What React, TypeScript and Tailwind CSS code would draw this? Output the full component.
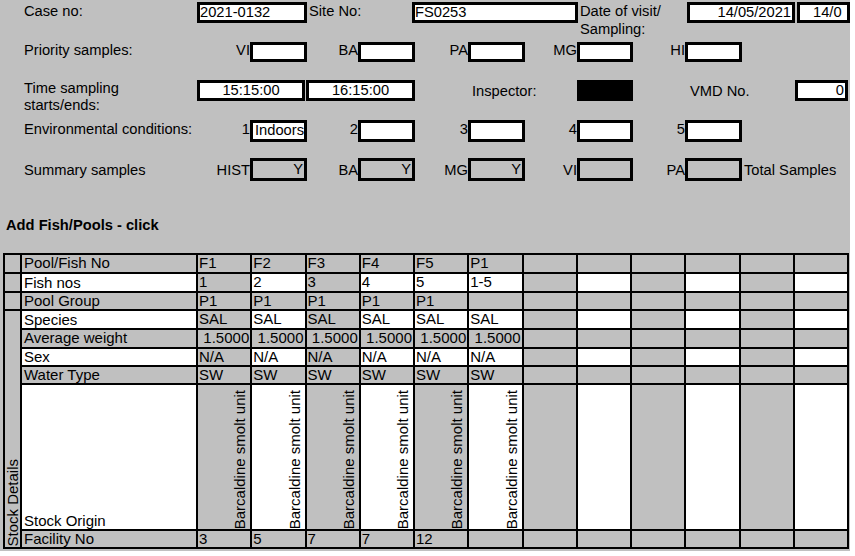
import React from 'react';

type FieldProps = { className?: string; children?: React.ReactNode };

const Field = ({ className = '', children }: FieldProps) => (
    <div className={`shrink-0 border-[3px] border-black overflow-hidden whitespace-nowrap leading-[15px] ${className}`}>
        {children}
    </div>
);

const Lbl = ({ className = '', children }: FieldProps) => (
    <div className={`shrink-0 whitespace-nowrap leading-4 ${className}`}>{children}</div>
);

// grid rows of the stock table
const rows = [
    { label: 'Pool/Fish No', vals: ['F1', 'F2', 'F3', 'F4', 'F5', 'P1'], kind: 'gray' },
    { label: 'Fish nos', vals: ['1', '2', '3', '4', '5', '1-5'], kind: 'alt' },
    { label: 'Pool Group', vals: ['P1', 'P1', 'P1', 'P1', 'P1', ''], kind: 'gray' },
    { label: 'Species', vals: ['SAL', 'SAL', 'SAL', 'SAL', 'SAL', 'SAL'], kind: 'alt' },
    { label: 'Average weight', vals: ['1.5000', '1.5000', '1.5000', '1.5000', '1.5000', '1.5000'], kind: 'gray', right: true },
    { label: 'Sex', vals: ['N/A', 'N/A', 'N/A', 'N/A', 'N/A', 'N/A'], kind: 'alt' },
    { label: 'Water Type', vals: ['SW', 'SW', 'SW', 'SW', 'SW', 'SW'], kind: 'gray' },
    { label: 'Stock Origin', vals: Array(6).fill('Barcaldine smolt unit'), kind: 'col', rotated: true },
    { label: 'Facility No', vals: ['3', '5', '7', '7', '12', ''], kind: 'gray' },
];

const cellBg = (kind: string, c: number) => {
    if (kind === 'gray') return 'bg-[#c0c0c0]';
    if (kind === 'alt' && c === 4) return 'bg-white';
    return c % 2 === 0 ? 'bg-[#c0c0c0]' : 'bg-white';
};

const StockTable = () => (
    <div className="ml-[3px] mt-[20px] w-[846px] grid grid-cols-[15px_174px_repeat(12,minmax(0,1fr))] grid-rows-[17px_17px_16px_17px_17px_16px_16px_144px_16px] gap-[2px] p-[2px] bg-black text-[15px] leading-4">
        {rows.map((row, r) => (
            <React.Fragment key={row.label}>
                {r < 3 && <div className="bg-[#c0c0c0]" />}
                {r === 3 && (
                    <div className="row-span-6 bg-[#c0c0c0] flex items-end justify-center overflow-hidden">
                        <span className="[writing-mode:vertical-rl] rotate-180 whitespace-nowrap leading-4">Stock Details</span>
                    </div>
                )}
                <div className={`pl-[2px] overflow-hidden whitespace-nowrap ${row.kind !== 'gray' ? 'bg-white flex items-end' : 'bg-[#c0c0c0]'}`}>
                    {row.label}
                </div>
                {Array.from({ length: 12 }).map((_, c) => {
                    const val = row.vals[c] ?? '';
                    const bg = cellBg(row.kind, c);
                    if (row.rotated) {
                        return (
                            <div key={c} className={`${bg} flex justify-end items-end pr-[2px] overflow-hidden`}>
                                {val && <span className="[writing-mode:vertical-rl] rotate-180 whitespace-nowrap leading-4">{val}</span>}
                            </div>
                        );
                    }
                    return (
                        <div key={c} className={`${bg} overflow-hidden whitespace-nowrap ${row.right ? 'text-right pr-[1px]' : 'pl-[1px]'}`}>
                            {val}
                        </div>
                    );
                })}
            </React.Fragment>
        ))}
    </div>
);

export default function App() {
    return (
        <div className="w-[855px] h-[556px] bg-white">
            <div className="w-[850px] h-[551px] bg-[#c0c0c0] overflow-hidden text-[14.7px] text-black font-['Liberation_Sans',Arial,sans-serif]">
                {/* row 1 */}
                <div className="flex h-[21px] mt-[2px]">
                    <Lbl className="w-[197px] pl-[24px] pt-[1px]">Case no:</Lbl>
                    <Field className="w-[110px] bg-white">2021-0132</Field>
                    <Lbl className="w-[105px] pl-[2px] pt-[1px]">Site No:</Lbl>
                    <Field className="w-[166px] bg-white">FS0253</Field>
                    <Lbl className="w-[109px] pl-[2px] leading-[18px]">Date of visit/<br />Sampling:</Lbl>
                    <Field className="w-[108px] bg-white text-right pr-[1px]">14/05/2021</Field>
                    <Field className="ml-[2px] w-[53px] bg-white pl-[13px]">14/0</Field>
                </div>

                {/* row 2 */}
                <div className="flex h-[20px] mt-[19px]">
                    <Lbl className="w-[250px] pl-[24px] flex justify-between"><span>Priority samples:</span><span>VI</span></Lbl>
                    <Field className="w-[57px] bg-white" />
                    <Lbl className="w-[51px] text-right">BA</Lbl>
                    <Field className="w-[57px] bg-white" />
                    <Lbl className="w-[53px] text-right">PA</Lbl>
                    <Field className="w-[57px] bg-white" />
                    <Lbl className="w-[52px] text-right">MG</Lbl>
                    <Field className="w-[56px] bg-white" />
                    <Lbl className="w-[52px] text-right">HI</Lbl>
                    <Field className="w-[57px] bg-white" />
                </div>

                {/* row 3 */}
                <div className="flex h-[21px] mt-[18px]">
                    <Lbl className="w-[197px] pl-[24px] leading-[17px]">Time sampling<br />starts/ends:</Lbl>
                    <Field className="w-[108px] bg-white text-center">15:15:00</Field>
                    <Field className="ml-[1px] w-[109px] bg-white text-center">16:15:00</Field>
                    <Lbl className="w-[162px] pl-[57px] pt-[3px]">Inspector:</Lbl>
                    <Field className="w-[56px] bg-black" />
                    <Lbl className="w-[162px] pl-[57px] pt-[3px]">VMD No.</Lbl>
                    <Field className="w-[53px] bg-white text-right pr-[1px]">0</Field>
                </div>

                {/* row 4 */}
                <div className="flex h-[22px] mt-[19px]">
                    <Lbl className="w-[250px] pl-[24px] pt-[1px] flex justify-between"><span>Environmental conditions:</span><span>1</span></Lbl>
                    <Field className="w-[57px] bg-white pl-[2px] border-[2px] leading-4">Indoors</Field>
                    <Lbl className="w-[51px] text-right pt-[1px]">2</Lbl>
                    <Field className="w-[57px] bg-white" />
                    <Lbl className="w-[53px] text-right pt-[1px]">3</Lbl>
                    <Field className="w-[57px] bg-white" />
                    <Lbl className="w-[52px] text-right pt-[1px]">4</Lbl>
                    <Field className="w-[56px] bg-white" />
                    <Lbl className="w-[52px] text-right pt-[1px]">5</Lbl>
                    <Field className="w-[57px] bg-white" />
                </div>

                {/* row 5 */}
                <div className="flex items-center h-[23px] mt-[16px]">
                    <Lbl className="w-[250px] pl-[24px] flex justify-between"><span>Summary samples</span><span>HIST</span></Lbl>
                    <Field className="w-[57px] h-[23px] text-right pr-[1px] leading-[17px]">Y</Field>
                    <Lbl className="w-[51px] text-right">BA</Lbl>
                    <Field className="w-[57px] h-[23px] text-right pr-[1px] leading-[17px]">Y</Field>
                    <Lbl className="w-[53px] text-right">MG</Lbl>
                    <Field className="w-[57px] h-[23px] text-right pr-[1px] leading-[17px]">Y</Field>
                    <Lbl className="w-[52px] text-right">VI</Lbl>
                    <Field className="w-[56px] h-[23px]" />
                    <Lbl className="w-[52px] text-right">PA</Lbl>
                    <Field className="w-[57px] h-[23px]" />
                    <Lbl className="pl-[2px]">Total Samples</Lbl>
                </div>

                <div className="mt-[36px] pl-[6px] font-bold leading-4">Add Fish/Pools - click</div>

                <StockTable />
            </div>
        </div>
    );
}
